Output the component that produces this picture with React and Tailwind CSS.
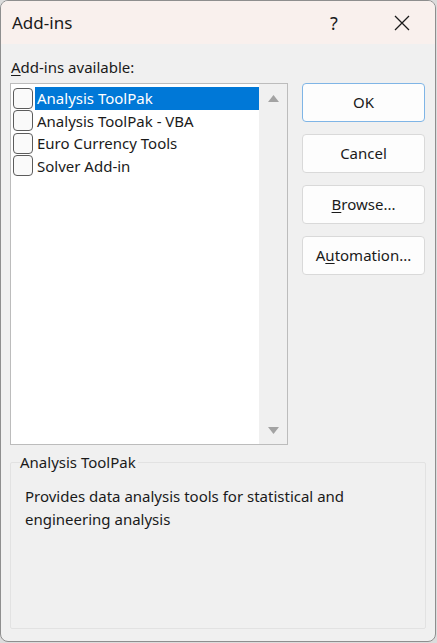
import React, { useState } from 'react';

const items = [
  'Analysis ToolPak',
  'Analysis ToolPak - VBA',
  'Euro Currency Tools',
  'Solver Add-in',
];

const font = { fontFamily: '"Noto Sans", "Open Sans", sans-serif' };

function DialogButton({ children, primary }) {
  return (
    <button
      className={`w-[123px] h-[39px] rounded-[4px] bg-[#fdfdfd] text-[15px] text-[#1a1a1a] border ${
        primary ? 'border-[#7fb5e6]' : 'border-[#d9d9d9]'
      }`}
    >
      {children}
    </button>
  );
}

export default function App() {
  const [selected, setSelected] = useState(0);

  return (
    <div className="w-[437px] h-[643px] bg-[#dcdcdc]" style={font}>
      <div className="w-[436px] h-[642px] rounded-[8px] border border-[#8e8e8e] overflow-hidden flex flex-col bg-[#f0f0f0]">
        {/* title bar */}
        <div className="h-[43px] shrink-0 bg-[#f9f0ed] flex items-center pl-[11px] text-[#1a1a1a]">
          <span className="text-[17px] leading-none pb-[1px]">Add-ins</span>
          <span className="ml-auto text-[18px] leading-none w-[12px] mr-[51px]">?</span>
          <svg width="18" height="18" viewBox="0 0 18 18" className="mr-[24px]">
            <path d="M2 2 L16 16 M16 2 L2 16" stroke="#1a1a1a" strokeWidth="1.3" fill="none" />
          </svg>
        </div>

        {/* body */}
        <div className="flex-1 px-[9px] text-[15px] text-[#1a1a1a]">
          <div className="pt-[13px] h-[39px] leading-[20px] pl-[1px]">
            <span className="underline underline-offset-2">A</span>dd-ins available:
          </div>

          <div className="flex">
            <div className="w-[278px] h-[362px] border border-[#bcbcbc] bg-white flex">
              <div className="flex-1 pt-[3px] pl-[2px]">
                {items.map((name, i) => (
                  <div
                    key={name}
                    className="flex items-center h-[22.5px] cursor-default"
                    onClick={() => setSelected(i)}
                  >
                    <span className="w-[20px] h-[21px] rounded-[4px] border border-[#5c5c5c] bg-[#fafafa] shrink-0" />
                    <span
                      className={`ml-[2px] h-full flex items-center pl-[2px] pr-2 flex-1 whitespace-nowrap ${
                        selected === i ? 'bg-[#0078d7] text-white' : ''
                      }`}
                    >
                      {name}
                    </span>
                  </div>
                ))}
              </div>
              <div className="w-[28px] bg-[#f0f0f0] flex flex-col items-center justify-between pt-[11px] pb-[10px]">
                <svg width="11" height="7" viewBox="0 0 11 7">
                  <path d="M5.5 0 L11 7 L0 7 Z" fill="#a3a3a3" />
                </svg>
                <svg width="11" height="7" viewBox="0 0 11 7">
                  <path d="M0 0 L11 0 L5.5 7 Z" fill="#a3a3a3" />
                </svg>
              </div>
            </div>

            <div className="ml-[14px] flex flex-col gap-[12px]">
              <DialogButton primary>OK</DialogButton>
              <DialogButton>Cancel</DialogButton>
              <DialogButton>
                <span className="underline underline-offset-2">B</span>rowse...
              </DialogButton>
              <DialogButton>
                A<span className="underline underline-offset-2">u</span>tomation...
              </DialogButton>
            </div>
          </div>

          {/* group box */}
          <fieldset className="mt-[7px] w-[416px] h-[177px] border border-[#e2e2e2] rounded-[2px] pl-[14px] pr-3">
            <legend className="px-0 -ml-[5px] leading-[20px] pr-[2px]">Analysis ToolPak</legend>
            <p className="mt-[13px] leading-[23px]">
              Provides data analysis tools for statistical and engineering analysis
            </p>
          </fieldset>
        </div>
      </div>
    </div>
  );
}
